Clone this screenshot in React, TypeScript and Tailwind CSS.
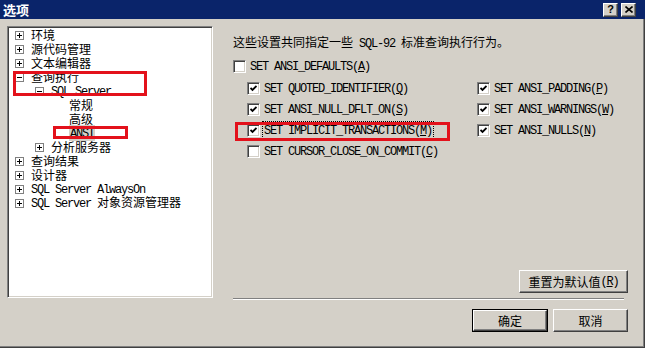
import type { ReactNode } from "react";

const bevel =
  "border border-t-white border-l-white border-r-[#404040] border-b-[#404040] shadow-[inset_-1px_-1px_0_#808080]";

function M({ children }: { children: ReactNode }) {
  return <span className="font-['Liberation_Mono',monospace] tracking-[-1.2px] whitespace-pre">{children}</span>;
}

function TreeBox({ open }: { open: boolean }) {
  return (
    <span className="w-[9px] h-[9px] mr-[7px] shrink-0 border border-[#808080] bg-white flex items-center justify-center">
      <svg width="7" height="7" viewBox="0 0 7 7">
        <path d="M1 3.5H6" stroke="black" strokeWidth="1" />
        {!open && <path d="M3.5 1V6" stroke="black" strokeWidth="1" />}
      </svg>
    </span>
  );
}

const tree: { level: number; box?: "+" | "-"; label: ReactNode; selected?: boolean }[] = [
  { level: 0, box: "+", label: "环境" },
  { level: 0, box: "+", label: "源代码管理" },
  { level: 0, box: "+", label: "文本编辑器" },
  { level: 0, box: "-", label: "查询执行" },
  { level: 1, box: "-", label: <M>SQL Server</M> },
  { level: 2, label: "常规" },
  { level: 2, label: "高级" },
  { level: 2, label: <M>ANSI</M>, selected: true },
  { level: 1, box: "+", label: "分析服务器" },
  { level: 0, box: "+", label: "查询结果" },
  { level: 0, box: "+", label: "设计器" },
  { level: 0, box: "+", label: <M>SQL Server AlwaysOn</M> },
  { level: 0, box: "+", label: <><M>SQL Server </M>对象资源管理器</> },
];

function CheckBox({ checked }: { checked: boolean }) {
  return (
    <span className="w-[13px] h-[13px] shrink-0 bg-white border border-t-[#808080] border-l-[#808080] border-r-white border-b-white shadow-[inset_1px_1px_0_#404040,inset_-1px_-1px_0_#d4d0c8] flex items-center justify-center">
      {checked && (
        <svg width="7" height="7" viewBox="0 0 7 7">
          <path d="M0.5 3 L2.5 5 L6.5 1" stroke="black" strokeWidth="1.8" fill="none" />
        </svg>
      )}
    </span>
  );
}

function Option({ text, k, checked, focused }: { text: string; k: string; checked: boolean; focused?: boolean }) {
  return (
    <div className="h-[14px] flex items-center">
      <CheckBox checked={checked} />
      <span className={`ml-[3px] px-px leading-[14px] ${focused ? "outline outline-1 outline-dotted outline-black" : ""}`}>
        <M>
          {text}(<u>{k}</u>)
        </M>
      </span>
    </div>
  );
}

export default function App() {
  return (
    <div className="relative w-[645px] h-[348px] bg-[#d4d0c8] flex flex-col text-[12px] text-black font-['Noto_Sans_CJK_SC',sans-serif] shadow-[inset_-1px_-1px_0_#404040,inset_-2px_-2px_0_#808080] overflow-hidden">
      <div className="h-[19px] shrink-0 bg-[#0a246a] flex items-center justify-between pl-[3px] pr-[9px]">
        <span className="text-white font-bold text-[13px] leading-[19px]">选项</span>
        <div className="flex gap-[3px]">
          <span className={`w-[15px] h-[14px] bg-[#d4d0c8] ${bevel} flex items-center justify-center text-[11px] font-bold leading-none font-['Liberation_Sans',sans-serif]`}>
            ?
          </span>
          <span className={`w-[15px] h-[14px] bg-[#d4d0c8] ${bevel} flex items-center justify-center`}>
            <svg width="8" height="7" viewBox="0 0 8 7">
              <path d="M0.5 0.5 L7.5 6.5 M7.5 0.5 L0.5 6.5" stroke="black" strokeWidth="1.6" />
            </svg>
          </span>
        </div>
      </div>

      <div className="flex flex-1">
        <div className="pl-[7px] pt-[7px]">
          <div className="w-[206px] h-[272px] bg-white border border-t-[#808080] border-l-[#808080] border-r-white border-b-white shadow-[inset_1px_1px_0_#404040,inset_-1px_-1px_0_#d4d0c8] pt-[1px]">
            {tree.map((item, i) => (
              <div
                key={i}
                className="h-[14px] flex items-center leading-[14px]"
                style={{ paddingLeft: 7 + item.level * 20 }}
              >
                {item.box ? <TreeBox open={item.box === "-"} /> : <span className="w-[14px] shrink-0" />}
                <span className={item.selected ? "bg-[#d4d0c8] px-px" : ""}>{item.label}</span>
              </div>
            ))}
          </div>
        </div>

        <div className="flex-1 flex flex-col pl-[20px] pr-[17px]">
          <div className="mt-[15px] h-[16px] leading-[16px]">
            这些设置共同指定一些<M> SQL-92 </M>标准查询执行行为。
          </div>
          <div className="mt-[9px]">
            <Option text="SET ANSI_DEFAULTS" k="A" checked={false} />
          </div>
          <div className="mt-[8px] pl-[14px] grid grid-cols-[230px_1fr] gap-y-[7px]">
            <Option text="SET QUOTED_IDENTIFIER" k="Q" checked />
            <Option text="SET ANSI_PADDING" k="P" checked />
            <Option text="SET ANSI_NULL_DFLT_ON" k="S" checked />
            <Option text="SET ANSI_WARNINGS" k="W" checked />
            <Option text="SET IMPLICIT_TRANSACTIONS" k="M" checked focused />
            <Option text="SET ANSI_NULLS" k="N" checked />
            <Option text="SET CURSOR_CLOSE_ON_COMMIT" k="C" checked={false} />
          </div>

          <div className="mt-[112px] flex justify-end">
            <button className={`w-[109px] h-[23px] ${bevel} flex items-center justify-center leading-none`}>
              重置为默认值<M>(<u>R</u>)</M>
            </button>
          </div>
          <div className="mt-[5px] mr-[4px] h-[2px] border-t border-t-[#808080] border-b border-b-white" />
          <div className="mt-[9px] flex justify-end gap-[5px]">
            <button className="w-[76px] h-[23px] border border-black flex">
              <span className={`flex-1 ${bevel} flex items-center justify-center leading-none`}>确定</span>
            </button>
            <button className={`w-[75px] h-[23px] ${bevel} flex items-center justify-center leading-none`}>取消</button>
          </div>
        </div>
      </div>

      <div className="absolute left-[13px] top-[71px] w-[134px] h-[25px] border-[3px] border-[#e3111b]" />
      <div className="absolute left-[53px] top-[126px] w-[75px] h-[13px] border-[3px] border-[#e3111b]" />
      <div className="absolute left-[235px] top-[122px] w-[215px] h-[19px] border-[3px] border-[#e3111b]" />
    </div>
  );
}
